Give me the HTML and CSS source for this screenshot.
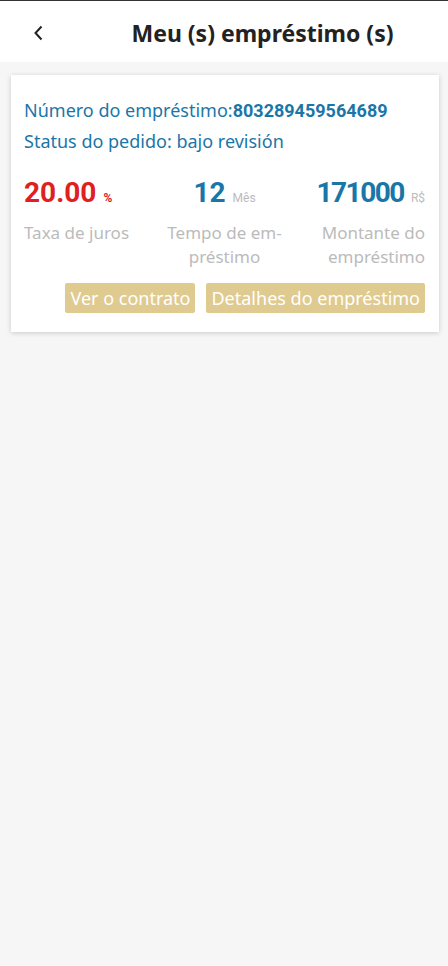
FILE: index.html
```html
<!DOCTYPE html>
<html lang="pt">
<head>
  <meta charset="UTF-8">
  <meta name="viewport" content="width=device-width, initial-scale=1.0">
  <title>Meu (s) empréstimo (s)</title>
  <link rel="stylesheet" href="styles.css">
</head>
<body>
  <header class="topbar">
    <a class="back" href="#">
      <svg width="14" height="16" viewBox="0 0 14 16"><path d="M9.5 1.5 L3.5 8 L9.5 14.5" fill="none" stroke="#222" stroke-width="2"/></svg>
    </a>
    <h1 class="title">Meu (s) empréstimo (s)</h1>
  </header>

  <div class="page">
    <div class="loan-card">
      <p class="info">Número do empréstimo:<b class="loan-no">803289459564689</b></p>
      <p class="info">Status do pedido: bajo revisión</p>

      <div class="stats">
        <div class="stat left">
          <div class="value red">20.00<span class="unit">%</span></div>
          <div class="label">Taxa de juros</div>
        </div>
        <div class="stat center">
          <div class="value">12<span class="unit grey">Mês</span></div>
          <div class="label">Tempo de em-<br>préstimo</div>
        </div>
        <div class="stat right">
          <div class="value"><span class="tight">171000</span><span class="unit grey">R$</span></div>
          <div class="label">Montante do<br>empréstimo</div>
        </div>
      </div>

      <div class="actions">
        <button class="btn">Ver o contrato</button>
        <button class="btn">Detalhes do empréstimo</button>
      </div>
    </div>
  </div>
</body>
</html>
```

FILE: styles.css
```css
html, body {
  height: 100%;
}

body {
  margin: 0;
  font-family: "Noto Sans", "Open Sans", sans-serif;
  background-color: #f6f6f6;
  border-top: 1px solid #333;
  box-sizing: border-box;
}

.topbar {
  height: 61px;
  background-color: #fff;
  display: flex;
  align-items: center;
  padding: 3px 0 0 32px;
  box-sizing: border-box;
}

.back {
  display: flex;
  width: 14px;
}

.title {
  flex: 1;
  text-align: center;
  margin: 0;
  padding-left: 31px;
  font-size: 23px;
  font-weight: bold;
  color: #222;
}

.page {
  padding: 13px 9px 0 11px;
}

.loan-card {
  background-color: #fff;
  box-shadow: 0 1px 5px rgba(0, 0, 0, 0.18);
  padding: 20px 14px 19px 13px;
}

.info {
  margin: 0;
  font-size: 18px;
  line-height: 31px;
  color: #1b76a8;
}

.loan-no {
  font-family: Roboto, sans-serif;
  font-weight: bold;
  font-size: 18px;
}

.stats {
  display: flex;
  justify-content: space-between;
  margin-top: 18px;
}

.stat {
  flex: 1;
}

.stat.center {
  text-align: center;
}

.stat.right {
  text-align: right;
}

.value {
  font-family: Roboto, sans-serif;
  font-weight: bold;
  font-size: 28px;
  line-height: 36px;
  color: #1b76a8;
}

.value.red {
  color: #e0201e;
}

.tight {
  letter-spacing: -1.5px;
}

.unit {
  font-size: 12px;
  margin-left: 7px;
  letter-spacing: 0;
}

.unit.grey {
  font-weight: normal;
  color: #bbb;
}

.label {
  margin-top: 5px;
  font-size: 17px;
  line-height: 24px;
  color: #bbb;
}

.actions {
  display: flex;
  justify-content: flex-end;
  gap: 11px;
  margin-top: 14px;
}

.btn {
  border: none;
  border-radius: 2px;
  background-color: #dfca90;
  color: #fff;
  font-family: "Noto Sans", sans-serif;
  font-size: 18px;
  padding: 0 5px;
  height: 30px;
}
```
